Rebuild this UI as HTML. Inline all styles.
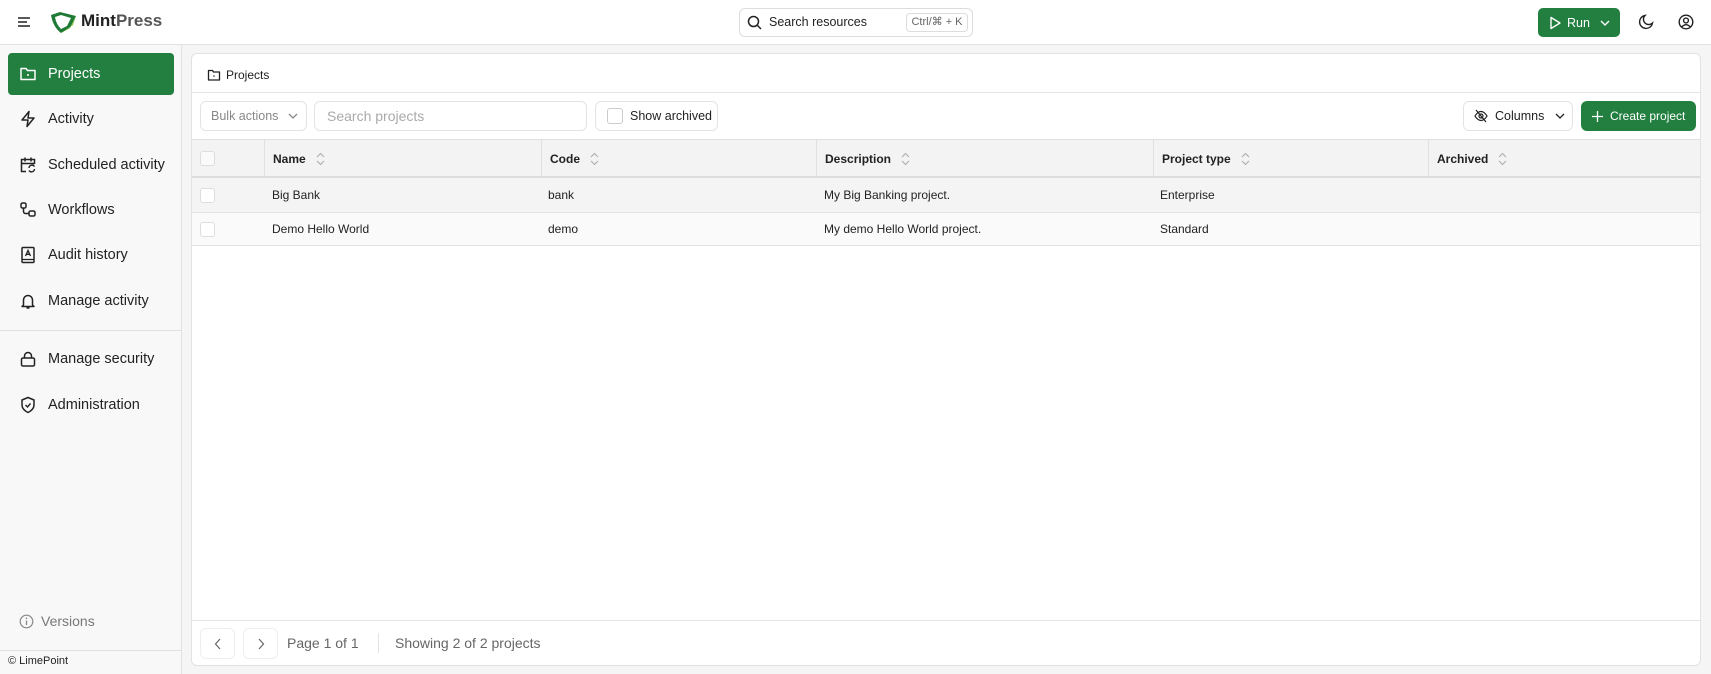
<!DOCTYPE html>
<html><head><meta charset="utf-8"><style>
*{box-sizing:border-box;margin:0;padding:0}
body{width:1711px;height:674px;overflow:hidden;background:#f5f5f5;font-family:"Liberation Sans","DejaVu Sans",sans-serif;color:#1f1f1f;position:relative}
.a{position:absolute}
svg{display:block}
.hdr{left:0;top:0;width:1711px;height:45px;background:#fff;border-bottom:1px solid #e2e2e2}
.side{left:0;top:45px;width:182px;height:629px;background:#f8f8f8;border-right:1px solid #e2e2e2}
.nav{position:absolute;left:8px;width:166px;height:42px;display:flex;align-items:center;padding-left:11px;font-size:14.5px;gap:11px;color:#222;border-radius:4px}
.nav.on{background:#227f40;color:#fff}
.card{left:191px;top:53px;width:1510px;height:613px;background:#fff;border:1px solid #e2e2e2;border-radius:6px;overflow:hidden}
.btn{position:absolute;border:1px solid #e3e3e3;border-radius:6px;background:#fff;display:flex;align-items:center;font-size:12.5px;white-space:nowrap}
.th{position:absolute;top:86px;height:38px;display:flex;align-items:center;padding-left:8px;font-size:12px;font-weight:600;color:#222;border-left:1px solid #e0e0e0}
.th svg{margin-left:10px}
.cb{position:absolute;width:15px;height:15px;border:1px solid #ddd;border-radius:3px;background:#fafafa}
.td{position:absolute;font-size:12px;color:#222}
</style></head><body>
<div class="a hdr"></div>
<svg class="a" style="left:17px;top:15px" width="14" height="14" viewBox="0 0 14 14"><path d="M1 3h12M1 7h9M1 11h12" stroke="#222" stroke-width="1.5"/></svg>
<svg class="a" style="left:50px;top:11px" width="28" height="23" viewBox="0 0 28 23"><path d="M1 4 L10 1 L26 5 L20 17 L11 22 Q3 16 1 4Z" fill="#1e7a36"/><path d="M5 6 L11 4 L21 7 L17 15 L11 18 Q6 13 5 6Z" fill="#fff"/><path d="M11 22 L20 17 L26 5 L23 14 Z" fill="#8cc63f"/></svg>
<div class="a" style="left:81px;top:11px;font-size:17px;font-weight:bold;color:#222">Mint<span style="color:#555">Press</span></div>
<div class="a" style="left:739px;top:8px;width:234px;height:29px;border:1px solid #ddd;border-radius:6px;background:#fff"></div>
<svg class="a" style="left:747px;top:15px" width="15" height="15" viewBox="0 0 15 15"><circle cx="6.5" cy="6.5" r="5" fill="none" stroke="#222" stroke-width="1.5"/><path d="M10 10l4 4" stroke="#222" stroke-width="1.5"/></svg>
<div class="a" style="left:769px;top:15px;font-size:12.5px">Search resources</div>
<div class="a" style="left:906px;top:13px;width:62px;height:19px;border:1px solid #ddd;border-radius:4px;font-size:11px;color:#666;text-align:center;line-height:17px">Ctrl/⌘ + K</div>
<div class="a" style="left:1538px;top:8px;width:82px;height:29px;background:#227f40;border-radius:5px;color:#fff;font-size:12.5px;display:flex;align-items:center;padding-left:11px;gap:6px"><svg width="12" height="14" viewBox="0 0 12 14"><path d="M2 1.5v11l9-5.5z" fill="none" stroke="#fff" stroke-width="1.4" stroke-linejoin="round"/></svg>Run<svg width="10" height="8" viewBox="0 0 10 8" style="margin-left:4px"><path d="M1 2l4 4 4-4" fill="none" stroke="#fff" stroke-width="1.4"/></svg></div>
<svg class="a" style="left:1638px;top:14px" width="16" height="16" viewBox="0 0 16 16"><path d="M7 1.5A6.5 6.5 0 1 0 14.5 9 5 5 0 0 1 7 1.5z" fill="none" stroke="#222" stroke-width="1.4"/></svg>
<svg class="a" style="left:1678px;top:14px" width="16" height="16" viewBox="0 0 16 16"><circle cx="8" cy="8" r="6.8" fill="none" stroke="#222" stroke-width="1.4"/><circle cx="8" cy="6.5" r="2.4" fill="none" stroke="#222" stroke-width="1.4"/><path d="M3.8 12.8Q8 8.5 12.2 12.8" fill="none" stroke="#222" stroke-width="1.4"/></svg>

<div class="a side"></div>
<div class="nav on" style="top:53px"><svg width="18" height="18" viewBox="0 0 18 18"><path d="M2 3.5h5l1.5 2H16v9H2z" fill="none" stroke="#fff" stroke-width="1.5" stroke-linejoin="round"/><circle cx="9" cy="10" r="1" fill="#fff"/></svg>Projects</div>
<div class="nav" style="top:98px"><svg width="18" height="18" viewBox="0 0 18 18"><path d="M10 1.5L3 10h6l-1 6.5L15 8H9z" fill="none" stroke="#222" stroke-width="1.5" stroke-linejoin="round"/></svg>Activity</div>
<div class="nav" style="top:144px"><svg width="18" height="18" viewBox="0 0 18 18"><path d="M7 15.5H2.5v-12h13V8M6 1.5v4M12 1.5v4M2.5 7.5h13" fill="none" stroke="#222" stroke-width="1.5"/><path d="M10 12a3 3 0 0 1 5.5-1.5M15.5 13a3 3 0 0 1-5.5 1.5" fill="none" stroke="#222" stroke-width="1.4"/></svg>Scheduled activity</div>
<div class="nav" style="top:189px"><svg width="18" height="18" viewBox="0 0 18 18"><rect x="2" y="2" width="5" height="5" rx="1.5" fill="none" stroke="#222" stroke-width="1.5"/><rect x="10" y="10" width="6" height="5" rx="1.5" fill="none" stroke="#222" stroke-width="1.5"/><path d="M4.5 7v3.5a2 2 0 0 0 2 2H10" fill="none" stroke="#222" stroke-width="1.5"/></svg>Workflows</div>
<div class="nav" style="top:234px"><svg width="18" height="18" viewBox="0 0 18 18"><rect x="3" y="1.5" width="12" height="15" rx="1" fill="none" stroke="#222" stroke-width="1.5"/><path d="M3 13.5h12M6.5 10L9 4.5 11.5 10M7.3 8.3h3.4" fill="none" stroke="#222" stroke-width="1.3"/></svg>Audit history</div>
<div class="nav" style="top:280px"><svg width="18" height="18" viewBox="0 0 18 18"><path d="M4.5 13V8a4.5 4.5 0 0 1 9 0v5l1.5 1.5H3z M7.5 16h3" fill="none" stroke="#222" stroke-width="1.5" stroke-linejoin="round"/></svg>Manage activity</div>
<div class="a" style="left:0;top:330px;width:181px;height:1px;background:#e0e0e0"></div>
<div class="nav" style="top:338px"><svg width="18" height="18" viewBox="0 0 18 18"><rect x="2.5" y="8" width="13" height="8" rx="1.5" fill="none" stroke="#222" stroke-width="1.5"/><path d="M5.5 8V6a3.5 3.5 0 0 1 7 0v2" fill="none" stroke="#222" stroke-width="1.5"/></svg>Manage security</div>
<div class="nav" style="top:384px"><svg width="18" height="18" viewBox="0 0 18 18"><path d="M9 1.5l6 2.5v5c0 3.5-3 6-6 7.5-3-1.5-6-4-6-7.5V4z" fill="none" stroke="#222" stroke-width="1.5" stroke-linejoin="round"/><path d="M6.5 9l2 2 3-3.5" fill="none" stroke="#222" stroke-width="1.4"/></svg>Administration</div>
<div class="a" style="left:19px;top:613px;display:flex;align-items:center;gap:7px;font-size:14px;color:#777"><svg width="15" height="15" viewBox="0 0 15 15"><circle cx="7.5" cy="7.5" r="6.3" fill="none" stroke="#888" stroke-width="1.2"/><path d="M7.5 6.5v4.5" stroke="#888" stroke-width="1.3"/><circle cx="7.5" cy="4.3" r=".8" fill="#888"/></svg>Versions</div>
<div class="a" style="left:0;top:650px;width:181px;height:1px;background:#e0e0e0"></div>
<div class="a" style="left:8px;top:655px;font-size:11px;color:#222">© LimePoint</div>

<div class="a card">
 <div class="a" style="left:15px;top:14px;display:flex;align-items:center;gap:5px;font-size:12px"><svg width="14" height="14" viewBox="0 0 14 14"><path d="M1.5 2.5h4l1 1.5h6v8h-11z" fill="none" stroke="#222" stroke-width="1.3" stroke-linejoin="round"/><circle cx="7" cy="8" r=".8" fill="#222"/></svg>Projects</div>
 <div class="a" style="left:0;top:38px;width:1510px;height:1px;background:#e5e5e5"></div>
 <div class="btn" style="left:8px;top:47px;width:107px;height:30px;padding-left:10px;color:#888">Bulk actions<svg width="10" height="8" viewBox="0 0 10 8" style="margin-left:10px"><path d="M1 2l4 4 4-4" fill="none" stroke="#888" stroke-width="1.3"/></svg></div>
 <div class="btn" style="left:122px;top:47px;width:273px;height:30px;padding-left:12px;color:#aaa;font-size:14px">Search projects</div>
 <div class="btn" style="left:403px;top:47px;width:123px;height:30px;padding-left:11px;gap:7px;color:#222"><span style="width:16px;height:16px;border:1px solid #ccc;border-radius:3px"></span>Show archived</div>
 <div class="btn" style="left:1271px;top:47px;width:110px;height:30px;padding-left:10px;gap:7px;color:#222"><svg width="14" height="14" viewBox="0 0 14 14"><path d="M1 7s2.5-4.5 6-4.5S13 7 13 7s-2.5 4.5-6 4.5S1 7 1 7z" fill="none" stroke="#222" stroke-width="1.2"/><circle cx="7" cy="7" r="2" fill="none" stroke="#222" stroke-width="1.2"/><path d="M2 1l10 12" stroke="#222" stroke-width="1.2"/></svg>Columns<svg width="10" height="8" viewBox="0 0 10 8" style="margin-left:4px"><path d="M1 2l4 4 4-4" fill="none" stroke="#222" stroke-width="1.3"/></svg></div>
 <div class="btn" style="left:1389px;top:47px;width:115px;height:30px;padding-left:10px;gap:7px;background:#227f40;border-color:#227f40;color:#fff;font-size:12px"><svg width="11" height="11" viewBox="0 0 11 11"><path d="M5.5 0v11M0 5.5h11" stroke="#fff" stroke-width="1.3"/></svg>Create project</div>
 <div class="a" style="left:0;top:85px;width:1510px;height:39px;background:#f3f3f3;border-top:1px solid #e0e0e0;border-bottom:2px solid #dcdcdc"></div>
 <div class="cb" style="left:8px;top:97px"></div>
 <div class="th" style="left:72px;width:277px">Name<svg width="9" height="14" viewBox="0 0 9 14"><path d="M1 5l3.5-3.5L8 5M1 9l3.5 3.5L8 9" fill="none" stroke="#aaa" stroke-width="1"/></svg></div>
 <div class="th" style="left:349px;width:275px">Code<svg width="9" height="14" viewBox="0 0 9 14"><path d="M1 5l3.5-3.5L8 5M1 9l3.5 3.5L8 9" fill="none" stroke="#aaa" stroke-width="1"/></svg></div>
 <div class="th" style="left:624px;width:337px">Description<svg width="9" height="14" viewBox="0 0 9 14"><path d="M1 5l3.5-3.5L8 5M1 9l3.5 3.5L8 9" fill="none" stroke="#aaa" stroke-width="1"/></svg></div>
 <div class="th" style="left:961px;width:275px">Project type<svg width="9" height="14" viewBox="0 0 9 14"><path d="M1 5l3.5-3.5L8 5M1 9l3.5 3.5L8 9" fill="none" stroke="#aaa" stroke-width="1"/></svg></div>
 <div class="th" style="left:1236px;width:274px">Archived<svg width="9" height="14" viewBox="0 0 9 14"><path d="M1 5l3.5-3.5L8 5M1 9l3.5 3.5L8 9" fill="none" stroke="#aaa" stroke-width="1"/></svg></div>
 <div class="a" style="left:0;top:124px;width:1510px;height:35px;background:#f4f4f4;border-bottom:1px solid #e3e3e3"></div>
 <div class="a" style="left:0;top:159px;width:1510px;height:33px;background:#fafafa;border-bottom:1px solid #e3e3e3"></div>
 <div class="cb" style="left:8px;top:134px;background:#fff"></div>
 <div class="cb" style="left:8px;top:168px;background:#fff"></div>
 <div class="td" style="left:80px;top:134px">Big Bank</div><div class="td" style="left:356px;top:134px">bank</div><div class="td" style="left:632px;top:134px">My Big Banking project.</div><div class="td" style="left:968px;top:134px">Enterprise</div>
 <div class="td" style="left:80px;top:168px">Demo Hello World</div><div class="td" style="left:356px;top:168px">demo</div><div class="td" style="left:632px;top:168px">My demo Hello World project.</div><div class="td" style="left:968px;top:168px">Standard</div>
 <div class="a" style="left:0;top:566px;width:1510px;height:1px;background:#e5e5e5"></div>
 <div class="btn" style="left:8px;top:574px;width:35px;height:31px;justify-content:center;border-color:#eee"><svg width="8" height="12" viewBox="0 0 8 12"><path d="M6 1L1.5 6 6 11" fill="none" stroke="#666" stroke-width="1.2"/></svg></div>
 <div class="btn" style="left:51px;top:574px;width:35px;height:31px;justify-content:center;border-color:#eee"><svg width="8" height="12" viewBox="0 0 8 12"><path d="M2 1l4.5 5L2 11" fill="none" stroke="#666" stroke-width="1.2"/></svg></div>
 <div class="a" style="left:95px;top:581px;font-size:14px;color:#666">Page 1 of 1</div>
 <div class="a" style="left:186px;top:579px;width:1px;height:20px;background:#e3e3e3"></div>
 <div class="a" style="left:203px;top:581px;font-size:14px;color:#666">Showing 2 of 2 projects</div>
</div>
</body></html>
